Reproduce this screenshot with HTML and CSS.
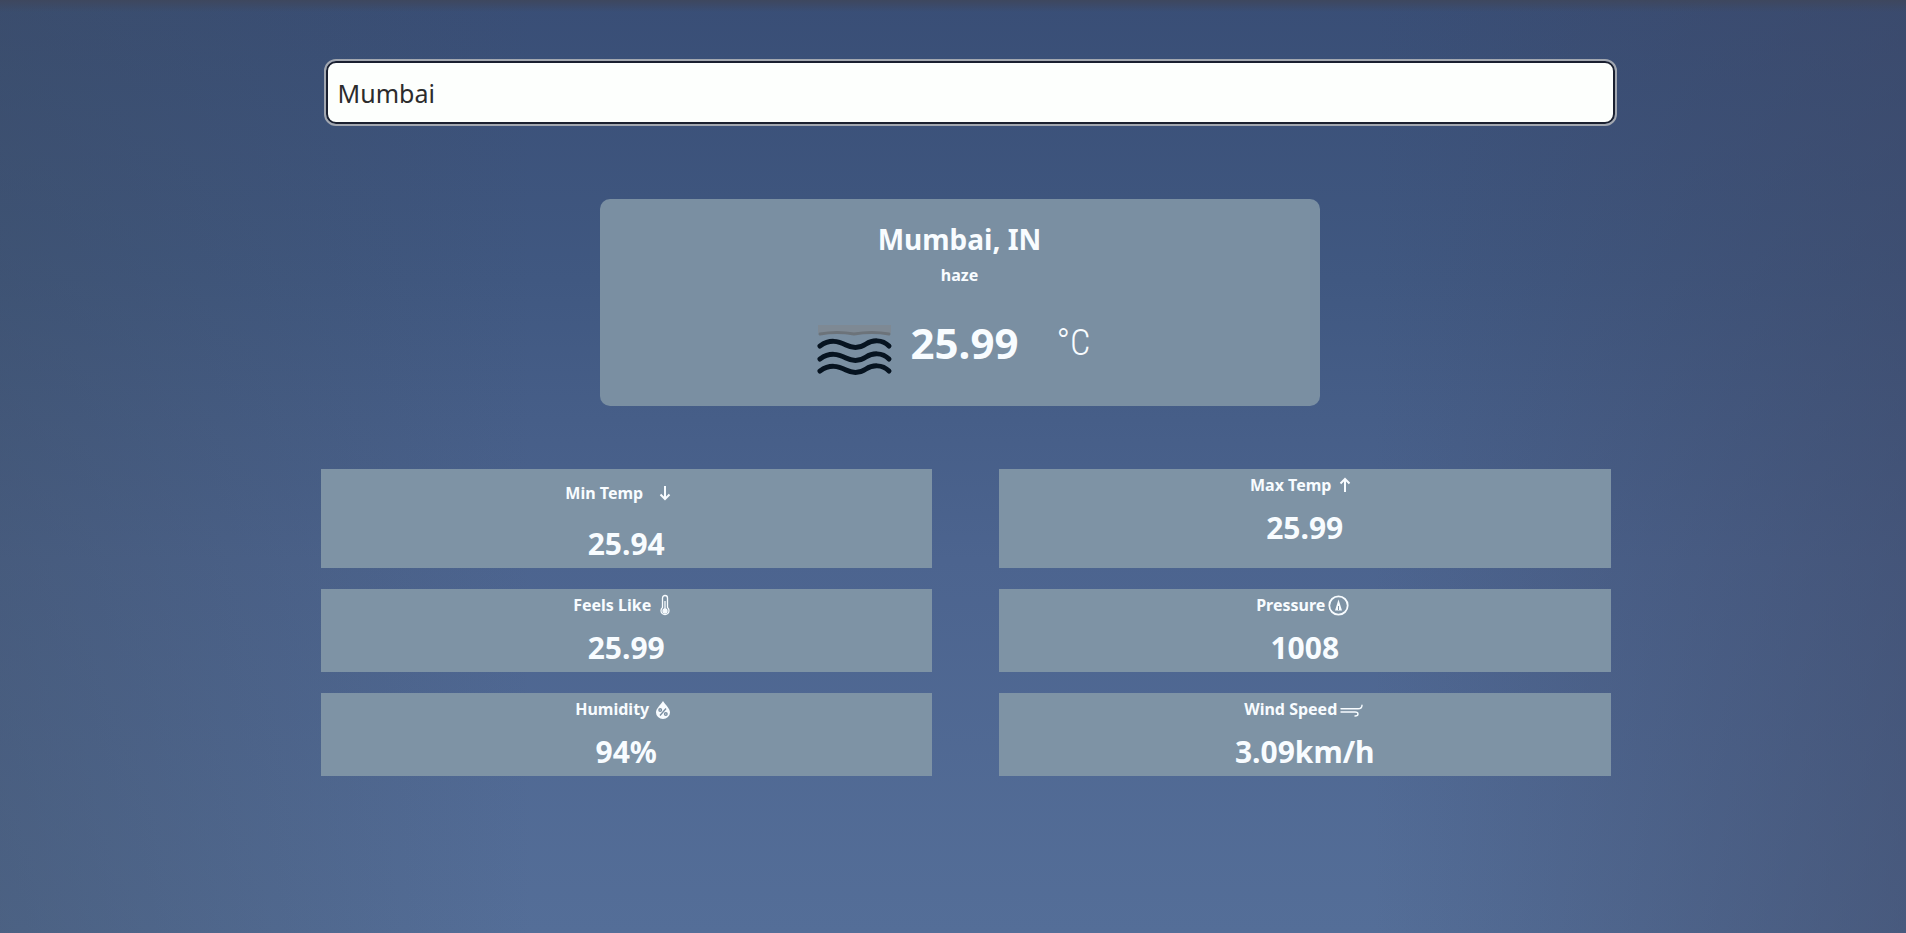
FILE: index.html
```html
<!DOCTYPE html>
<html lang="en">
<head>
  <meta charset="utf-8">
  <meta name="viewport" content="width=device-width, initial-scale=1">
  <title>Weather</title>
  <link rel="stylesheet" href="styles.css">
</head>
<body>
  <main class="weather">
    <form class="search">
      <input class="search-input" type="text" name="city" value="Mumbai" aria-label="City">
    </form>

    <section class="summary">
      <h1 class="city">Mumbai, IN</h1>
      <p class="condition">haze</p>
      <div class="current">
        <svg class="haze-icon" viewBox="0 0 100 100" fill="none" stroke-linecap="round" aria-hidden="true">
          <path d="M13 32h73v8h-73z" fill="#80858a" opacity=".6"/>
          <path d="M15 41q17-3 34 0q18-3 35 0" stroke="#6c737a" stroke-width="3"/>
          <g stroke="#061320" stroke-width="5">
            <path d="M15 53C25 46 33 48 41 52S55 55 61 51S77 46 84 53"/>
            <path d="M15 66C25 59 33 61 41 65S55 68 61 64S77 59 84 66"/>
            <path d="M15 78C25 71 33 73 41 77S55 80 61 76S77 71 84 78"/>
          </g>
        </svg>
        <span class="temperature">25.99</span>
        <span class="unit">°C</span>
      </div>
    </section>

    <section class="details">
      <article class="tile tile-spaced">
        <h2 class="label">Min Temp
          <svg class="icon" viewBox="0 0 28 24" fill="none" stroke="currentColor" stroke-width="2" aria-hidden="true"><path d="M14 5v13M9.500 13.500l4.500 4.500 4.500-4.500"/></svg>
        </h2>
        <p class="value">25.94</p>
      </article>
      <article class="tile">
        <h2 class="label">Max Temp
          <svg class="icon" viewBox="0 0 28 24" fill="none" stroke="currentColor" stroke-width="2" aria-hidden="true"><path d="M14 19V6M9.500 10.500L14 6l4.500 4.500"/></svg>
        </h2>
        <p class="value">25.99</p>
      </article>
      <article class="tile">
        <h2 class="label">Feels Like
          <svg class="icon" viewBox="0 0 28 24" fill="none" stroke="currentColor" stroke-width="1.300" aria-hidden="true"><path d="M11.500 14.500V5a2.500 2.500 0 0 1 5 0v9.500a4 4 0 1 1-5 0z"/><path d="M14 8v8"/><circle cx="14" cy="18" r="2" fill="currentColor"/></svg>
        </h2>
        <p class="value">25.99</p>
      </article>
      <article class="tile">
        <h2 class="label">Pressure
          <svg class="icon" viewBox="0 0 28 24" fill="none" stroke="currentColor" stroke-width="1.800" aria-hidden="true"><circle cx="13.500" cy="12.500" r="9.200"/><path d="M13.500 6.500l3.500 11h-7z" fill="currentColor" stroke="none"/><path d="M13.500 13v4" stroke="#7f94a6" stroke-width="1"/></svg>
        </h2>
        <p class="value">1008</p>
      </article>
      <article class="tile">
        <h2 class="label">Humidity
          <svg class="icon" viewBox="0 0 28 24" fill="none" aria-hidden="true"><path d="M14 4C16.500 8 21 11.500 21 15.500a7 6.500 0 0 1-14 0C7 11.500 11.500 8 14 4z" fill="currentColor"/><g stroke="#7b90a3" stroke-width="1.400"><path d="M17 11.500l-6 7"/><circle cx="11.200" cy="13" r="1.300"/><circle cx="16.800" cy="17" r="1.300"/></g></svg>
        </h2>
        <p class="value">94%</p>
      </article>
      <article class="tile">
        <h2 class="label">Wind Speed
          <svg class="icon" viewBox="0 0 28 24" fill="none" stroke="currentColor" stroke-width="1.400" stroke-linecap="round" aria-hidden="true"><path d="M4 11.800h17q4 0 4-3.500M4 15h14q3 0 3 2t-3 2"/></svg>
        </h2>
        <p class="value">3.09km/h</p>
      </article>
    </section>
  </main>
</body>
</html>
```
FILE: styles.css
```css
* {
  box-sizing: border-box;
}

body {
  margin: 0;
  min-height: 100vh;
  padding: 61px 0 61px 25px;
  font-family: "Noto Sans", "Open Sans", sans-serif;
  color: #f8fcff;
  background:
    linear-gradient(180deg, #3e475e 0, rgba(62, 71, 94, 0) 12px),
    linear-gradient(90deg, rgba(60, 74, 92, 0.35) 0%, rgba(60, 74, 92, 0) 28%, rgba(60, 70, 100, 0) 72%, rgba(60, 70, 100, 0.5) 100%),
    linear-gradient(180deg, #394e76 0%, #405881 30%, #4c648f 60%, #546e98 100%);
}

h1,
h2,
p {
  margin: 0;
}

.weather {
  max-width: 1290px;
  margin: 0 auto;
  display: flex;
  flex-direction: column;
}

.search {
  margin: 0 -4px 75px 5px;
}

.search-input {
  display: block;
  width: 100%;
  height: 63px;
  padding: 0 10px;
  border: 2px solid #1a2030;
  border-radius: 10px;
  outline: 2px solid #a2a7b0;
  background: #fdfffd;
  color: #2c2c2c;
  font-family: inherit;
  font-size: 25px;
}

.summary {
  align-self: center;
  width: 100%;
  max-width: 720px;
  margin: 0 6px 63px -6px;
  padding: 20px 0 13px;
  border-radius: 10px;
  background: #7a8fa2;
  text-align: center;
}

.city {
  font-size: 28px;
  line-height: 40px;
}

.condition {
  margin-top: 4px;
  font-size: 16px;
  font-weight: 700;
  line-height: 24px;
}

.current {
  display: flex;
  justify-content: center;
  align-items: center;
  margin-top: 6px;
}

.haze-icon {
  width: 100px;
  height: 100px;
  margin-right: 6px;
}

.temperature {
  font-size: 42px;
  font-weight: 700;
  line-height: 60px;
}

.unit {
  margin: 0 24px 0 38px;
  font-family: "Roboto Condensed", Roboto, sans-serif;
  font-size: 36px;
  font-weight: 300;
  line-height: 60px;
}

.details {
  display: grid;
  grid-template-columns: 1fr 1fr;
  gap: 21px 67px;
}

.tile {
  padding: 4px 0;
  background: #7e93a5;
  text-align: center;
}

.label {
  display: flex;
  justify-content: center;
  align-items: center;
  margin-bottom: 10px;
  font-size: 16px;
  line-height: 24px;
}

.icon {
  width: 28px;
  height: 24px;
}

.tile-spaced .label {
  padding: 8px 0;
}

.tile-spaced .icon {
  margin: 0 8px;
}

.value {
  font-size: 30px;
  font-weight: 700;
  line-height: 41px;
}
```
